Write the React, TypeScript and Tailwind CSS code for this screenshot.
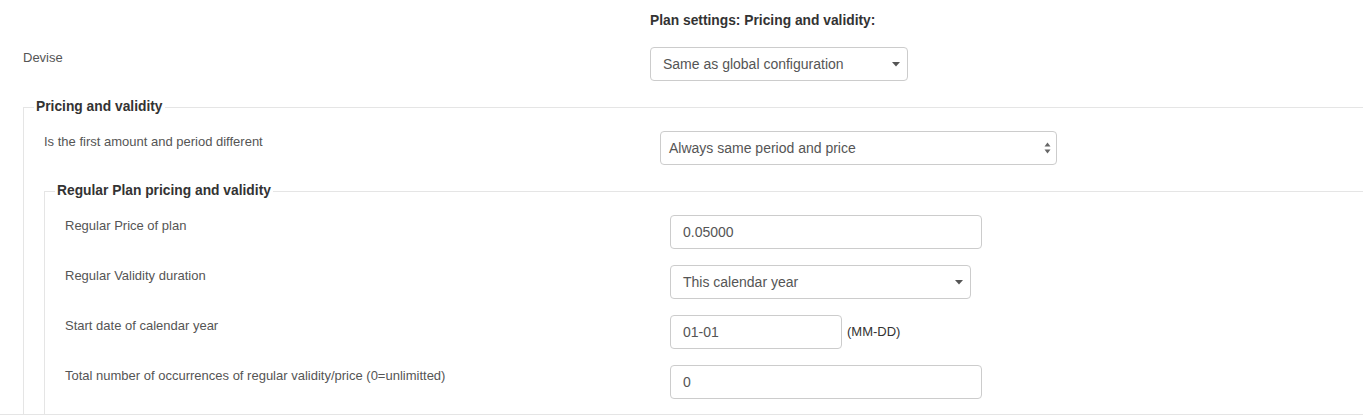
import React from 'react';

function Caret() {
  return (
    <svg width="8" height="5" viewBox="0 0 8 5" className="shrink-0">
      <path d="M0 0 L8 0 L4 4.5 Z" fill="#555" />
    </svg>
  );
}

function UpDown() {
  return (
    <svg width="7" height="12" viewBox="0 0 7 12" className="shrink-0">
      <path d="M0.5 4.5 L6.5 4.5 L3.5 0.5 Z" fill="#666" />
      <path d="M0.5 7.5 L6.5 7.5 L3.5 11.5 Z" fill="#666" />
    </svg>
  );
}

function FakeSelect({ value, width, native = false }: { value: string; width: string; native?: boolean }) {
  return (
    <div
      className={`${width} h-[34px] shrink-0 flex items-center justify-between rounded-[4px] border border-[#ccc] bg-white text-[14px] text-[#555] ${
        native ? 'pl-[8px] pr-[5px]' : 'pl-[12px] pr-[7px]'
      }`}
    >
      <span>{value}</span>
      {native ? <UpDown /> : <Caret />}
    </div>
  );
}

function TextInput({ value, width }: { value: string; width: string }) {
  return (
    <div className={`${width} h-[34px] shrink-0 flex items-center rounded-[4px] border border-[#ccc] bg-white pl-[12px] text-[14px] text-[#555]`}>
      {value}
    </div>
  );
}

function Row({ label, labelWidth, children, className = '' }: { label: string; labelWidth: string; children: React.ReactNode; className?: string }) {
  return (
    <div className={`flex items-start ${className}`}>
      <div className={`${labelWidth} shrink-0 pt-[2px] leading-[18px]`}>{label}</div>
      <div className="flex items-center">{children}</div>
    </div>
  );
}

export default function App() {
  return (
    <div className="h-[416px] w-[1363px] overflow-hidden bg-white font-['Liberation_Sans',Arial,sans-serif] text-[13px] text-[#555]">
      <div className="h-[415px] overflow-hidden border-b border-[#e5e5e5]">
        <div className="pl-[650px] pt-[12px] leading-[18px] text-[13.8px] font-bold text-[#333]">Plan settings: Pricing and validity:</div>

        <Row label="Devise" labelWidth="w-[627px]" className="mt-[17px] pl-[23px]">
          <FakeSelect value="Same as global configuration" width="w-[258px]" />
        </Row>

        {/* Pricing and validity */}
        <fieldset className="ml-[23px] mt-[16px] w-[1420px] border border-[#e5e5e5] px-[10px] pb-[40px]">
          <legend className="px-[2px] leading-[20px] text-[13.8px] font-bold text-[#333]">Pricing and validity</legend>
          <div className="pl-[10px] pt-[14px]">
            <Row label="Is the first amount and period different" labelWidth="w-[616px]">
              <FakeSelect value="Always same period and price" width="w-[397px]" native />
            </Row>

            {/* Regular plan */}
            <fieldset className="mt-[16px] w-[1420px] border border-[#e5e5e5] px-[10px] pb-[40px]">
              <legend className="px-[2px] leading-[20px] text-[13.8px] font-bold text-[#333]">Regular Plan pricing and validity</legend>
              <div className="flex flex-col gap-[16px] pl-[10px] pt-[14px]">
                <Row label="Regular Price of plan" labelWidth="w-[605px]">
                  <TextInput value="0.05000" width="w-[312px]" />
                </Row>
                <Row label="Regular Validity duration" labelWidth="w-[605px]">
                  <FakeSelect value="This calendar year" width="w-[301px]" />
                </Row>
                <Row label="Start date of calendar year" labelWidth="w-[605px]">
                  <TextInput value="01-01" width="w-[172px]" />
                  <span className="ml-[5px] -mt-[1px] text-[#333]">(MM-DD)</span>
                </Row>
                <Row label="Total number of occurrences of regular validity/price (0=unlimitted)" labelWidth="w-[605px]">
                  <TextInput value="0" width="w-[312px]" />
                </Row>
              </div>
            </fieldset>
          </div>
        </fieldset>
      </div>
    </div>
  );
}
